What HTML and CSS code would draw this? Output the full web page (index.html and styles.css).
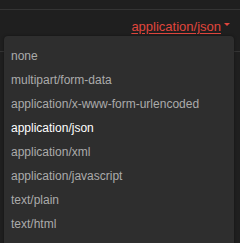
FILE: index.html
```html
<!DOCTYPE html>
<html>
<head>
<meta charset="utf-8">
<link rel="stylesheet" href="styles.css">
</head>
<body>
<div class="panel">
  <div class="topbar"></div>
  <div class="header">
    <div class="trigger">
      <span class="trigger-label">application/json</span>
      <span class="caret"></span>
    </div>
  </div>
  <div class="rest"></div>
  <ul class="menu">
    <li class="item">none</li>
    <li class="item">multipart/form-data</li>
    <li class="item">application/x-www-form-urlencoded</li>
    <li class="item selected">application/json</li>
    <li class="item">application/xml</li>
    <li class="item">application/javascript</li>
    <li class="item">text/plain</li>
    <li class="item">text/html</li>
  </ul>
</div>
</body>
</html>
```
FILE: styles.css
```css
html, body {
  margin: 0;
  padding: 0;
  background: #1f1f1f;
  font-family: "Liberation Sans", Arial, sans-serif;
}
.panel {
  position: relative;
  width: 240px;
  height: 243px;
  overflow: hidden;
}
.topbar {
  height: 9px;
  border-bottom: 1px solid #343434;
}
.header {
  height: 41px;
  border-bottom: 1px solid #343434;
  display: flex;
  justify-content: flex-end;
  align-items: flex-start;
  padding-right: 10px;
}
.trigger {
  display: flex;
  align-items: flex-start;
  gap: 3px;
  margin-top: 8px;
}
.trigger-label {
  color: #e0463d;
  font-size: 13px;
  line-height: 18px;
  text-decoration: underline;
  text-underline-offset: 2px;
}
.caret {
  width: 0;
  height: 0;
  margin-top: 5px;
  border-left: 3px solid transparent;
  border-right: 3px solid transparent;
  border-top: 3px solid #e0463d;
}
.menu {
  position: absolute;
  left: 4px;
  top: 36px;
  width: 230px;
  margin: 0;
  padding: 8px 0 0;
  list-style: none;
  background: #2e2e2e;
  border-radius: 4px;
  height: 240px;
  box-shadow: 0 0 3px rgba(0,0,0,0.4);
}
.item {
  padding: 0 7px;
  font-size: 12px;
  line-height: 24px;
  color: #ababab;
}
.item.selected {
  color: #ffffff;
}
```
